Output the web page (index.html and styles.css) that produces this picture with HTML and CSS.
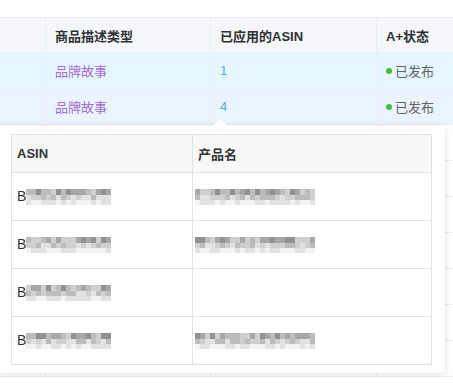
FILE: index.html
```html
<!DOCTYPE html>
<html lang="zh-CN">
<head>
    <meta charset="UTF-8">
    <meta name="viewport" content="width=device-width, initial-scale=1.0">
    <title>A+ 内容列表</title>
    <link rel="stylesheet" href="styles.css">
</head>
<body>
    <div class="page">
        <table class="list">
            <colgroup>
                <col class="c-sel">
                <col class="c-type">
                <col class="c-asin">
                <col class="c-status">
            </colgroup>
            <thead>
                <tr><th></th><th>商品描述类型</th><th>已应用的ASIN</th><th>A+状态</th></tr>
            </thead>
            <tbody>
                <tr class="row-hover">
                    <td></td>
                    <td class="type">品牌故事</td>
                    <td class="count">1</td>
                    <td class="status"><span class="dot"></span>已发布</td>
                </tr>
                <tr class="row-current">
                    <td></td>
                    <td class="type">品牌故事</td>
                    <td class="count">4</td>
                    <td class="status"><span class="dot"></span>已发布</td>
                </tr>
                <tr><td></td><td></td><td></td><td></td></tr>
                <tr><td></td><td></td><td></td><td></td></tr>
                <tr><td></td><td></td><td></td><td></td></tr>
                <tr><td></td><td></td><td></td><td></td></tr>
                <tr><td></td><td></td><td></td><td></td></tr>
                <tr><td></td><td></td><td></td><td></td></tr>
                <tr><td></td><td></td><td></td><td></td></tr>
            </tbody>
        </table>

        <!-- 已应用ASIN弹窗 -->
        <div class="popover">
            <span class="arrow"></span>
            <table class="asins">
                <colgroup><col class="c-code"><col></colgroup>
                <thead>
                    <tr><th>ASIN</th><th>产品名</th></tr>
                </thead>
                <tbody>
                    <tr>
                        <td>B<span class="mosaic" data-cols="17" data-seed="3"></span></td>
                        <td><span class="mosaic name" data-cols="24" data-seed="11"></span></td>
                    </tr>
                    <tr>
                        <td>B<span class="mosaic" data-cols="17" data-seed="7"></span></td>
                        <td><span class="mosaic name" data-cols="24" data-seed="19"></span></td>
                    </tr>
                    <tr>
                        <td>B<span class="mosaic" data-cols="17" data-seed="23"></span></td>
                        <td></td>
                    </tr>
                    <tr>
                        <td>B<span class="mosaic" data-cols="17" data-seed="31"></span></td>
                        <td><span class="mosaic name" data-cols="24" data-seed="41"></span></td>
                    </tr>
                </tbody>
            </table>
        </div>
    </div>
    <script src="script.js"></script>
</body>
</html>
```

FILE: styles.css
```css
body {
    margin: 0;
    background-color: #fff;
    font-family: 'Helvetica Neue', 'Liberation Sans', 'Noto Sans CJK SC', sans-serif;
    font-size: 13px;
    color: #606266;
    overflow: hidden;
}
.page {
    position: relative;
    padding-top: 17px;
}
.list {
    width: 560px;
    margin-left: -1px;
    border-collapse: collapse;
    table-layout: fixed;
}
.c-sel { width: 46px; }
.c-type { width: 165px; }
.c-asin { width: 166px; }
.list th, .list td {
    border: 1px solid #ebeef5;
    padding: 0 9px;
    text-align: left;
    white-space: nowrap;
}
.list th {
    height: 34px;
    background-color: #f5f7fa;
    color: #303133;
    font-weight: bold;
}
.list td {
    height: 35px;
}
.row-hover td {
    background-color: #e6f6fe;
}
.row-current td {
    background-color: #e9f4fc;
}
.type {
    color: #a66bd6;
}
.count {
    color: #5aa4f5;
}
.status {
    color: #606266;
}
.dot {
    display: inline-block;
    width: 6px;
    height: 6px;
    margin-right: 3px;
    border-radius: 50%;
    background-color: #4cba3c;
    vertical-align: 2px;
}
.popover {
    position: absolute;
    top: 126px;
    left: -2px;
    width: 447px;
    box-sizing: border-box;
    padding: 8px 13px;
    background-color: #fff;
    border-radius: 4px;
    box-shadow: 0 2px 10px rgba(0, 0, 0, 0.12);
}
.arrow {
    position: absolute;
    top: -7px;
    left: 215px;
    width: 0;
    height: 0;
    border-left: 7px solid transparent;
    border-right: 7px solid transparent;
    border-bottom: 7px solid #fff;
}
.asins {
    width: 421px;
    border-collapse: collapse;
    table-layout: fixed;
    color: #333;
}
.c-code { width: 181px; }
.asins th, .asins td {
    border: 1px solid #e2e2e2;
    padding: 0 5px;
    text-align: left;
    white-space: nowrap;
}
.asins th {
    height: 37px;
    background-color: #f8f8f8;
    font-weight: bold;
}
.asins td {
    height: 47px;
    font-size: 14px;
}
.mosaic {
    display: inline-grid;
    grid-auto-flow: column;
    grid-template-rows: 6px 5px 5px;
    grid-auto-columns: 5px;
    vertical-align: middle;
}
.mosaic.name {
    margin-left: -3px;
}
.mosaic i { display: block; }
.s0 { background-color: #f2f2f2; }
.s1 { background-color: #e2e2e2; }
.s2 { background-color: #d0d0d0; }
.s3 { background-color: #bcbcbc; }
.s4 { background-color: #a8a8a8; }
.s5 { background-color: #929292; }
```

FILE: script.js
```js
// 填充打码块
document.querySelectorAll('.mosaic').forEach(function(el) {
    let seed = parseInt(el.dataset.seed, 10);
    const cols = parseInt(el.dataset.cols, 10);
    function rand() {
        seed = (seed * 9301 + 49297) % 233280;
        return seed / 233280;
    }
    for (let c = 0; c < cols; c++) {
        for (let r = 0; r < 3; r++) {
            const cell = document.createElement('i');
            let shade = r === 0 ? 2 + Math.floor(rand() * 4) : r === 1 ? 1 + Math.floor(rand() * 3) : Math.floor(rand() * 2);
            cell.className = 's' + shade;
            el.appendChild(cell);
        }
    }
});
```
